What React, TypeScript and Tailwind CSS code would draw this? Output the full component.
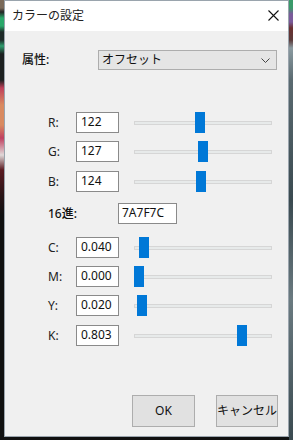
import React from "react";

const font = { fontFamily: '"Noto Sans", "Noto Sans CJK JP", sans-serif' };

type SliderRowProps = { label: string; text: string; value: number; mt: string };

function Slider({ value }: { value: number }) {
  return (
    <div className="relative ml-[15px] h-[21px] w-[138px] flex items-center">
      <div className="h-[4px] w-full bg-[#e7eaea] border border-[#d6d6d6]" />
      <div
        className="absolute top-0 h-[21px] w-[10px] bg-[#0078d7]"
        style={{ left: `${Math.round(value * 128)}px` }}
      />
    </div>
  );
}

function Row({ label, text, value, mt }: SliderRowProps) {
  return (
    <div className={`flex items-center pl-[43px] ${mt}`}>
      <div className="w-[28px] text-[12px] text-[#222]">{label}</div>
      <div className="h-[21px] w-[43px] border border-[#8a8a8a] bg-white pl-[4px] text-[12px] leading-[18px] text-[#111]">
        {text}
      </div>
      <Slider value={value} />
    </div>
  );
}

export default function App() {
  return (
    <div className="flex h-[440px] w-[293px] bg-[#101010]" style={font}>
      <div className="w-[4px] h-full bg-[linear-gradient(to_bottom,#7a6a5a_0px,#7a6a5a_8px,#242424_12px,#2aa86a_18px,#2aa86a_26px,#1e2a28_32px,#1e2a28_40px,#2f9f6f_46px,#1c2020_54px,#1c2020_80px,#c0405a_88px,#d98a60_105px,#d98a60_125px,#c04060_138px,#e0d8d8_155px,#5a1a20_170px,#2a1416_195px,#101010_215px,#101010_440px)]" />
      <div className="flex h-[437px] w-[285px] flex-col border border-[#9aa4ad] bg-[#f0f0f0]">
        <div className="flex h-[30px] shrink-0 items-center justify-between bg-white pl-[7px] pr-[9px]">
          <span className="text-[12px] text-[#222]">カラーの設定</span>
          <svg width="11" height="11" viewBox="0 0 11 11" className="mt-[-2px]">
            <path d="M0.5 0.5 L10.5 10.5 M10.5 0.5 L0.5 10.5" stroke="#111" strokeWidth="1.1" fill="none" />
          </svg>
        </div>
        <div className="flex flex-1 flex-col">
          <div className="mt-[19px] flex items-center pl-[17px]">
            <div className="w-[76px] text-[12px] font-medium text-[#111]">属性:</div>
            <div className="flex h-[20px] w-[179px] items-center justify-between border border-[#adadad] bg-[#e5e5e5] pl-[3px] pr-[6px]">
              <span className="text-[12px] text-[#111]">オフセット</span>
              <svg width="9" height="5" viewBox="0 0 9 5">
                <path d="M0.5 0.5 L4.5 4.5 L8.5 0.5" stroke="#444" strokeWidth="1" fill="none" />
              </svg>
            </div>
          </div>
          <Row label="R:" text="122" value={122 / 255} mt="mt-[42px]" />
          <Row label="G:" text="127" value={127 / 255} mt="mt-[8px]" />
          <Row label="B:" text="124" value={124 / 255} mt="mt-[9px]" />
          <div className="mt-[11px] flex items-center pl-[43px]">
            <div className="w-[70px] text-[12px] font-medium text-[#111]">16進:</div>
            <div className="h-[21px] w-[59px] border border-[#8a8a8a] bg-white pl-[3px] text-[12px] leading-[18px] text-[#111]">
              7A7F7C
            </div>
          </div>
          <Row label="C:" text="0.040" value={0.04} mt="mt-[13px]" />
          <Row label="M:" text="0.000" value={0} mt="mt-[8px]" />
          <Row label="Y:" text="0.020" value={0.02} mt="mt-[8px]" />
          <Row label="K:" text="0.803" value={0.803} mt="mt-[9px]" />
          <div className="mt-[49px] flex pl-[127px]">
            <button className="h-[32px] w-[63px] border border-[#adadad] bg-[#e1e1e1] text-[12px] text-[#111]">
              OK
            </button>
            <button className="ml-[21px] h-[32px] w-[62px] border border-[#adadad] bg-[#e1e1e1] text-[12px] text-[#111]">
              キャンセル
            </button>
          </div>
        </div>
      </div>
      <div className="w-[4px] h-full bg-[linear-gradient(to_bottom,#3a9a6a_0px,#3a9a6a_8px,#7a5a9a_14px,#7a5a9a_22px,#6a3030_28px,#5a3a3a_40px,#8a9aa0_48px,#5a6a70_80px,#3a4a50_200px,#6a7a80_300px,#3a4a50_440px)]" />
    </div>
  );
}
